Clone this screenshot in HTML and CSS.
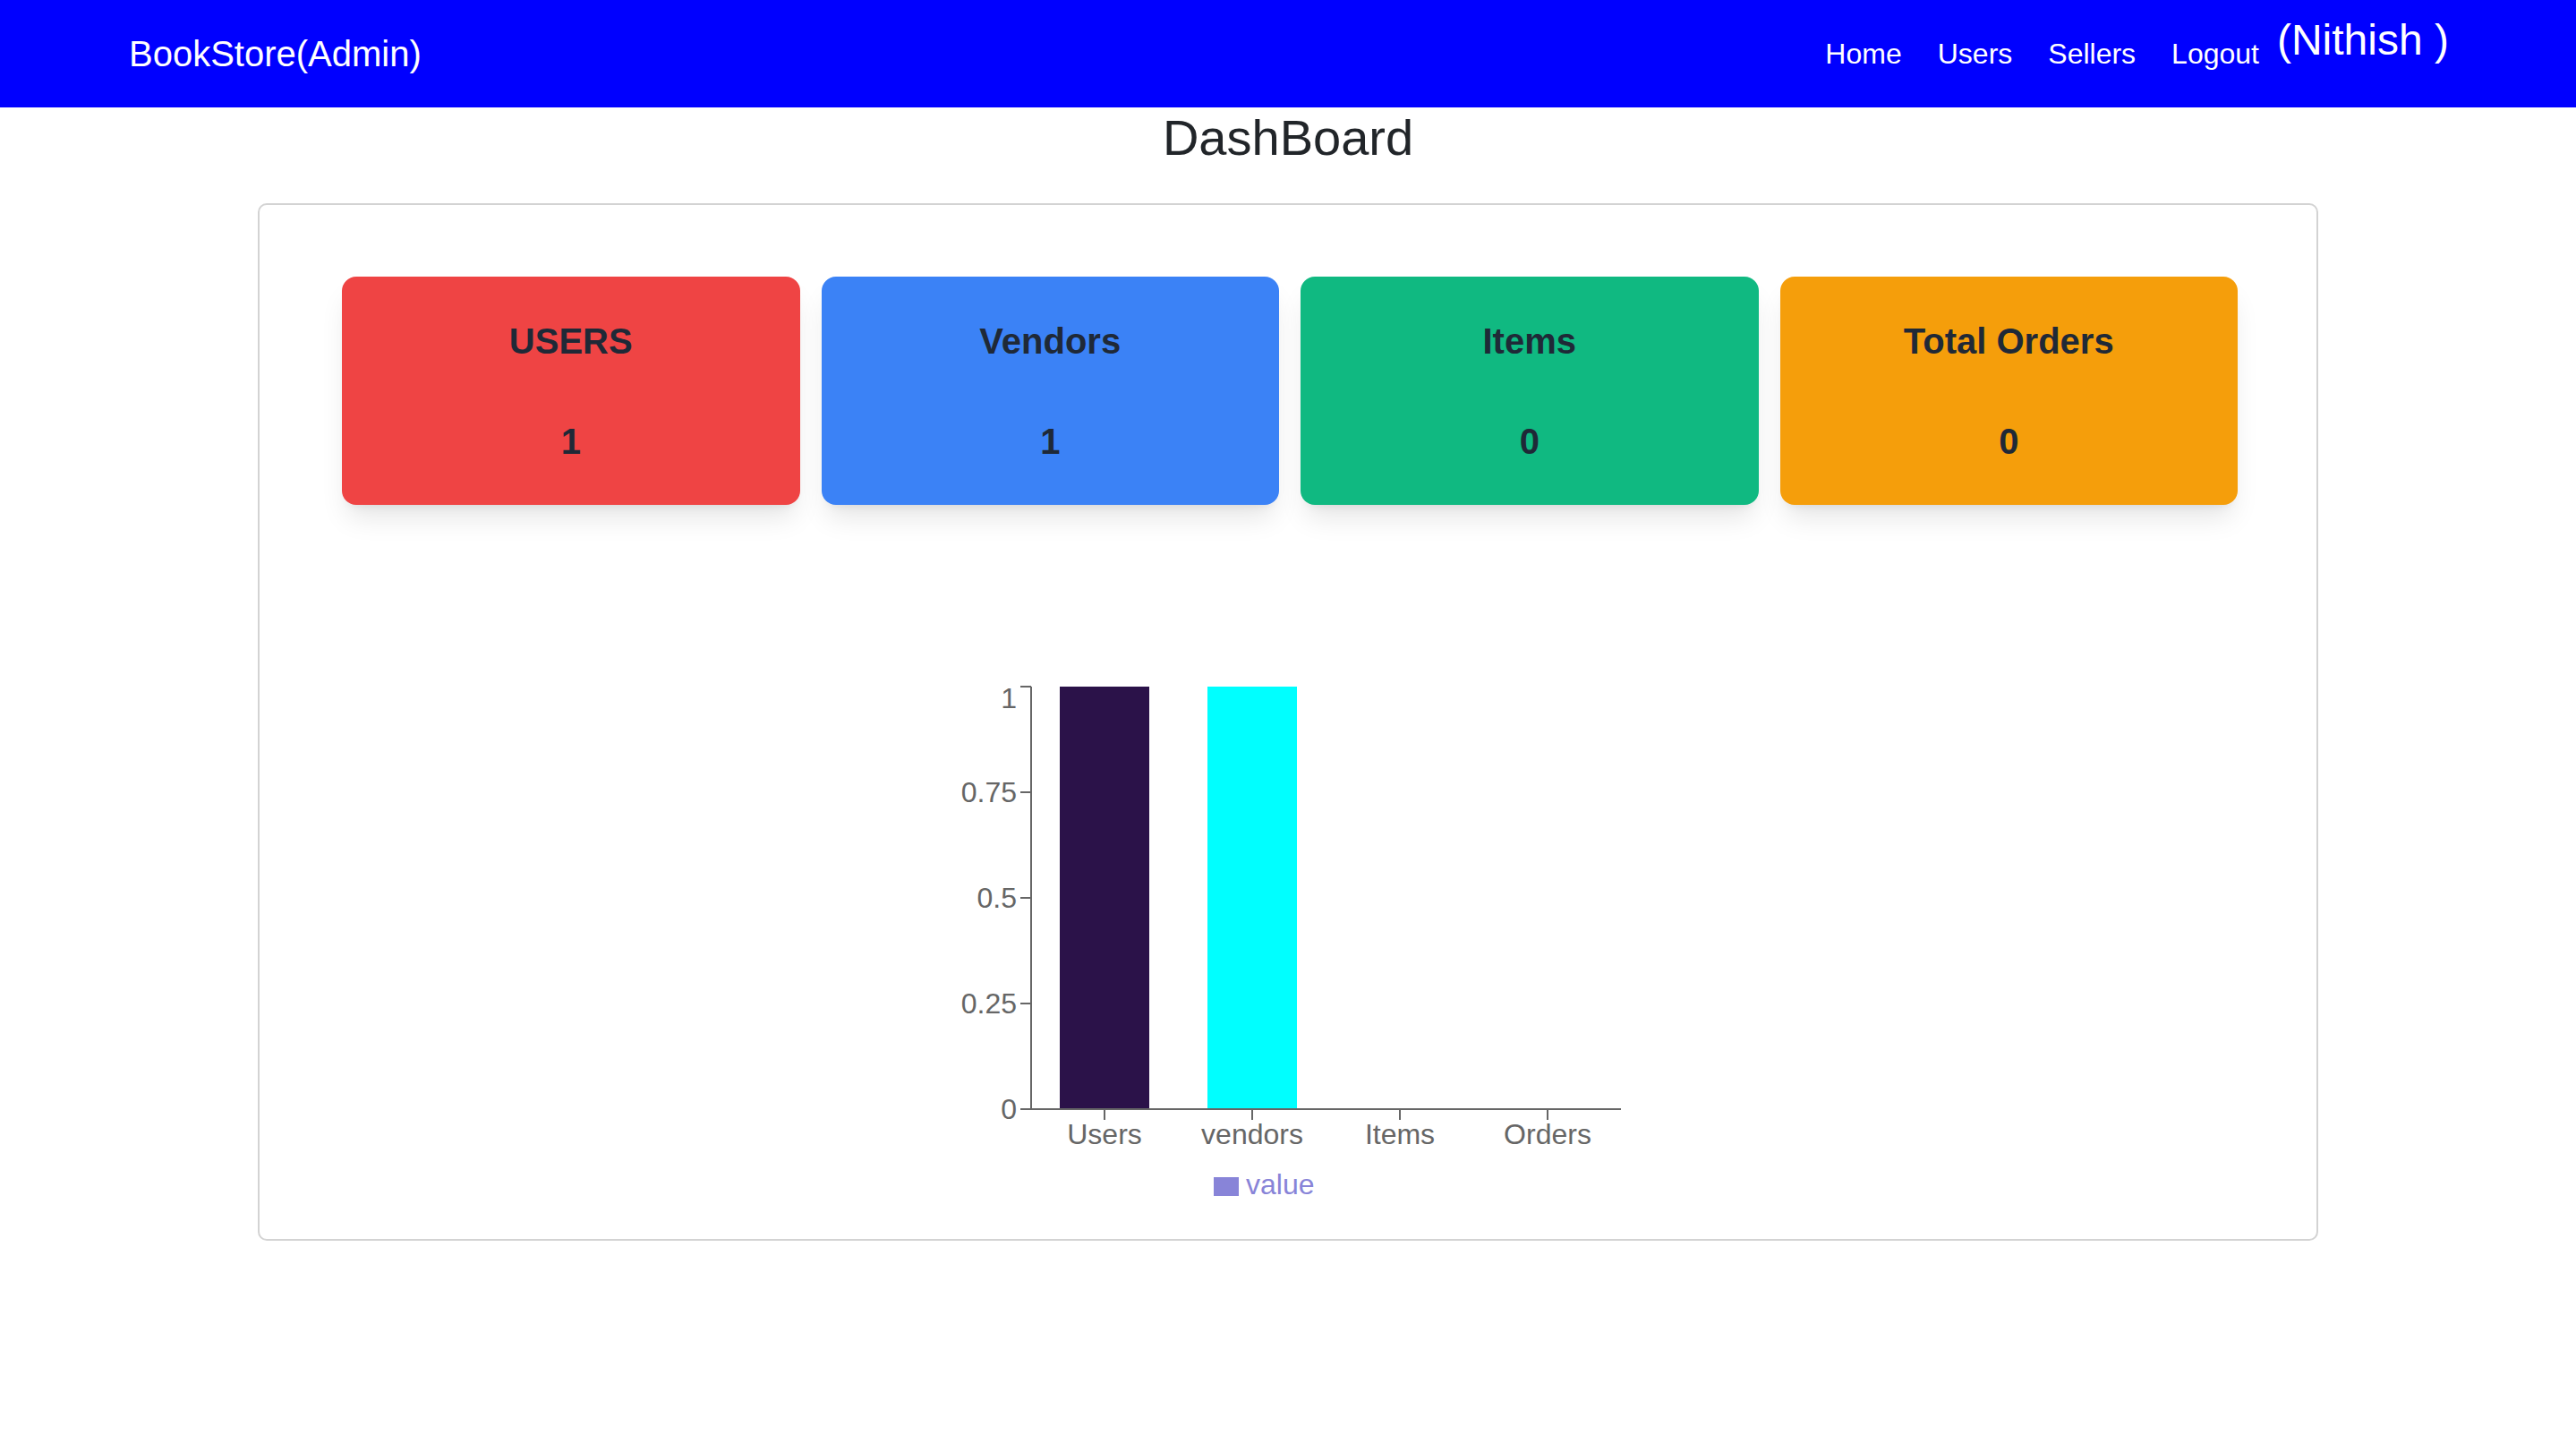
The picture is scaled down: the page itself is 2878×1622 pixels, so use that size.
FILE: index.html
```html
<!DOCTYPE html>
<html lang="en">
<head>
<meta charset="utf-8">
<title>BookStore Admin - DashBoard</title>
<link rel="stylesheet" href="styles.css">
</head>
<body>
<nav class="navbar">
  <a class="brand" href="#">BookStore(Admin)</a>
  <div class="nav-right">
    <ul class="nav-links">
      <li><a class="nav-link" href="#">Home</a></li>
      <li><a class="nav-link" href="#">Users</a></li>
      <li><a class="nav-link" href="#">Sellers</a></li>
      <li><a class="nav-link" href="#">Logout</a></li>
    </ul>
    <h3 class="user-name">(Nithish )</h3>
  </div>
</nav>

<h1 class="page-title">DashBoard</h1>

<section class="panel">
  <div class="stats">
    <div class="stat stat-red">
      <h2 class="stat-label">USERS</h2>
      <p class="stat-value">1</p>
    </div>
    <div class="stat stat-blue">
      <h2 class="stat-label">Vendors</h2>
      <p class="stat-value">1</p>
    </div>
    <div class="stat stat-green">
      <h2 class="stat-label">Items</h2>
      <p class="stat-value">0</p>
    </div>
    <div class="stat stat-orange">
      <h2 class="stat-label">Total Orders</h2>
      <p class="stat-value">0</p>
    </div>
  </div>

  <div class="chart">
    <svg class="chart-svg" width="880" height="600" viewBox="991 757 880 600" xmlns="http://www.w3.org/2000/svg">
      <!-- bars -->
      <rect x="1184" y="767" width="100" height="472" fill="#2b1249"/>
      <rect x="1349" y="767" width="100" height="472" fill="#00ffff"/>

      <!-- y axis -->
      <g class="axis">
        <line x1="1152" y1="767" x2="1152" y2="1239"/>
        <line x1="1140" y1="767" x2="1152" y2="767"/>
        <line x1="1140" y1="885" x2="1152" y2="885"/>
        <line x1="1140" y1="1003" x2="1152" y2="1003"/>
        <line x1="1140" y1="1121" x2="1152" y2="1121"/>
        <line x1="1140" y1="1239" x2="1152" y2="1239"/>
      </g>
      <g class="tick-text" text-anchor="end">
        <text x="1136" y="791">1</text>
        <text x="1136" y="896">0.75</text>
        <text x="1136" y="1014">0.5</text>
        <text x="1136" y="1132">0.25</text>
        <text x="1136" y="1250">0</text>
      </g>

      <!-- x axis -->
      <g class="axis">
        <line x1="1152" y1="1239" x2="1811" y2="1239"/>
        <line x1="1234" y1="1239" x2="1234" y2="1251"/>
        <line x1="1399" y1="1239" x2="1399" y2="1251"/>
        <line x1="1564" y1="1239" x2="1564" y2="1251"/>
        <line x1="1729" y1="1239" x2="1729" y2="1251"/>
      </g>
      <g class="tick-text" text-anchor="middle">
        <text x="1234" y="1278">Users</text>
        <text x="1399" y="1278">vendors</text>
        <text x="1564" y="1278">Items</text>
        <text x="1729" y="1278">Orders</text>
      </g>

      <!-- legend -->
      <rect x="1356" y="1315" width="28" height="21" fill="#8884d8"/>
      <text class="legend-text" x="1392" y="1334">value</text>
    </svg>
  </div>
</section>
</body>
</html>
```

FILE: styles.css
```css
html, body {
  margin: 0;
  padding: 0;
  background: #ffffff;
}

body {
  font-family: "Liberation Sans", Arial, Helvetica, sans-serif;
  color: #212529;
}

.navbar {
  display: flex;
  align-items: center;
  justify-content: space-between;
  height: 120px;
  padding: 0 142px 0 144px;
  background: #0000ff;
  box-sizing: border-box;
}

.brand {
  color: #ffffff;
  font-size: 40px;
  line-height: 48px;
  text-decoration: none;
}

.nav-right {
  display: flex;
  align-items: center;
}

.nav-links {
  display: flex;
  align-items: center;
  list-style: none;
  margin: 0;
  padding: 0;
}

.nav-link {
  display: block;
  padding: 0 20px;
  color: #ffffff;
  font-size: 32px;
  line-height: 40px;
  text-decoration: none;
}

.user-name {
  margin: 0 0 30px 0;
  color: #ffffff;
  font-size: 48px;
  font-weight: normal;
  line-height: 1.2;
}

.page-title {
  margin: 0;
  text-align: center;
  font-size: 56px;
  font-weight: normal;
  line-height: 1.2;
  color: #212529;
}

.panel {
  box-sizing: border-box;
  width: 2302px;
  margin: 40px auto 0;
  padding: 80px 88px 27px 92px;
  border: 2px solid #d3d3d3;
  border-radius: 10px;
}

.stats {
  display: grid;
  grid-template-columns: repeat(4, 1fr);
  gap: 24px;
}

.stat {
  box-sizing: border-box;
  height: 255px;
  padding: 44px 16px 43px;
  border-radius: 16px;
  text-align: center;
  color: #1f2937;
  box-shadow: 0 20px 30px -6px rgba(0, 0, 0, 0.1), 0 8px 12px -8px rgba(0, 0, 0, 0.1);
}

.stat-red { background: #ef4444; }
.stat-blue { background: #3b82f6; }
.stat-green { background: #10b981; }
.stat-orange { background: #f59e0b; }

.stat-label {
  margin: 0 0 56px 0;
  font-size: 40px;
  font-weight: bold;
  line-height: 56px;
}

.stat-value {
  margin: 0;
  font-size: 40px;
  font-weight: bold;
  line-height: 56px;
}

.chart {
  margin: 193px 0 0 609px;
}

.chart-svg {
  display: block;
}

.axis line {
  stroke: #666666;
  stroke-width: 2;
}

.tick-text text {
  fill: #666666;
  font-family: "Liberation Sans", Arial, Helvetica, sans-serif;
  font-size: 32px;
}

.legend-text {
  fill: #8884d8;
  font-family: "Liberation Sans", Arial, Helvetica, sans-serif;
  font-size: 32px;
}
```
